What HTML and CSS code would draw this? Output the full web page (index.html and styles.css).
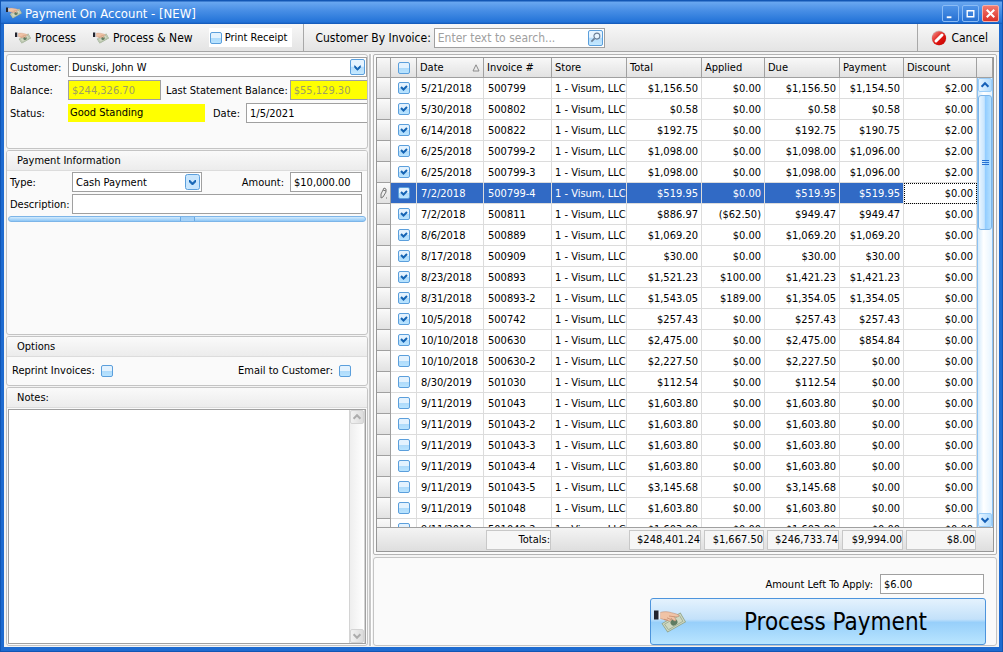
FILE: index.html
```html
<!DOCTYPE html>
<html lang="en">
<head>
<meta charset="utf-8">
<title>Payment On Account - [NEW]</title>
<link rel="stylesheet" href="styles.css">
</head>
<body>
<svg class="defs" aria-hidden="true">
  <defs>
    <linearGradient id="cancelRed" x1="0" y1="0" x2="1" y2="1">
      <stop offset="0" stop-color="#f2a09c"/><stop offset=".5" stop-color="#e01812"/><stop offset="1" stop-color="#c80000"/>
    </linearGradient>
    <symbol id="pay" viewBox="0 0 32 23">
      <path d="M7.500 13.500 26.500 2.500 32 12 13.500 22.500z" fill="#8fa287"/>
      <path d="M8.500 13.700 26.200 3.500l4.800 8.200L13.800 21.400z" fill="#cfd8c2"/>
      <path d="m10.500 14.200 15-8.700 3.400 5.800-14.400 8.400z" fill="none" stroke="#94a58c" stroke-width=".8"/>
      <ellipse cx="20" cy="12.300" rx="3.600" ry="3" transform="rotate(-30 20 12.300)" fill="#5f7c62"/>
      <path d="M6 2.500c4-1.200 8-1 11.500.2 3.500 1 6.500 1.300 7.500 3 .4 1-2 1.300-5 .9l1.800 2.800c.7 1.400-1 2-2.300.8L17 8.300c1 2.600-1 3.700-2.800 2.200C11.500 10.600 9 9 6 8.400z" fill="#f0c3a6" stroke="#c48f74" stroke-width=".6"/>
      <path d="m13 7.800 4.500 2M15 6l5 .7M10 9.300l4 1" stroke="#c18464" stroke-width=".7" fill="none"/>
      <path d="M4 1.300h2.300v7.600L4 9.200z" fill="#eef1f6"/>
      <path d="M0 .5h4.500v9H0z" fill="#23242e"/>
    </symbol>
  </defs>
</svg>
<div class="window">
  <header class="titlebar">
    <svg class="icon"><use href="#pay"/></svg>
    <h1 class="title">Payment On Account - [NEW]</h1>
    <button class="winbtn" aria-label="Minimize"><svg viewBox="0 0 16 16"><path d="M4 11h5v2H4z" fill="#fff"/></svg></button>
    <button class="winbtn" aria-label="Maximize"><svg viewBox="0 0 16 16"><path d="M4.500 5h7v6.500h-7zM4 5h8" fill="none" stroke="#fff" stroke-width="1.500"/></svg></button>
    <button class="winbtn winbtn-close" aria-label="Close"><svg viewBox="0 0 16 16"><path d="m4 4 8 8m0-8-8 8" stroke="#fff" stroke-width="2.200"/></svg></button>
  </header>

  <nav class="toolbar">
    <button class="tool"><svg class="icon"><use href="#pay"/></svg>Process</button>
    <button class="tool tool-new"><svg class="icon"><use href="#pay"/></svg>Process &amp; New</button>
    <label class="receipt"><input type="checkbox" class="check">Print Receipt</label>
    <div class="find">
      <label for="find">Customer By Invoice:</label>
      <div class="field search">
        <input id="find" type="text" placeholder="Enter text to search...">
        <button class="minibtn" aria-label="Search"><svg viewBox="0 0 14 14"><circle cx="8.500" cy="5.500" r="3.200" fill="#e8f5ff" stroke="#6b7f96" stroke-width="1.200"/><path d="M6 8 2.500 11.500" stroke="#6b7f96" stroke-width="1.800"/></svg></button>
      </div>
    </div>
    <div class="cancelbox">
      <button class="tool"><svg class="cancel-icon" viewBox="0 0 16 16"><circle cx="8" cy="8" r="7.500" fill="#c9c9c9"/><circle cx="8" cy="8.200" r="7" fill="url(#cancelRed)"/><path d="m5 11 6-6" stroke="#fff" stroke-width="3" stroke-linecap="round"/></svg>Cancel</button>
    </div>
  </nav>

  <main class="content">
    <div class="left">
      <section class="panel customer">
        <div class="row">
          <label class="lab" for="customer">Customer:</label>
          <div class="field combo">
            <input id="customer" type="text" value="Dunski, John W">
            <button class="minibtn" aria-label="Open customer list"><svg viewBox="0 0 14 14"><path d="m4 5 3 3 3-3v2L7 10 4 7z" fill="#1464b4" stroke="#1464b4"/></svg></button>
          </div>
        </div>
        <div class="row">
          <label class="lab" for="balance">Balance:</label>
          <input id="balance" class="box yellow balance" type="text" value="$244,326.70" disabled>
          <label for="last">Last Statement Balance:</label>
          <input id="last" class="box yellow last" type="text" value="$55,129.30" disabled>
        </div>
        <div class="row">
          <span class="lab">Status:</span>
          <output class="status">Good Standing</output>
          <label class="datelab" for="date">Date:</label>
          <input id="date" class="box date" type="text" value="1/5/2021">
        </div>
      </section>

      <section class="panel payment">
        <h2 class="head">Payment Information</h2>
        <div class="payrows">
          <div class="row">
            <label class="lab2" for="type">Type:</label>
            <div class="selectbox">
              <select id="type"><option>Cash Payment</option></select>
            </div>
            <label class="amountlab" for="amount">Amount:</label>
            <input id="amount" class="box amount" type="text" value="$10,000.00">
          </div>
          <div class="row">
            <label class="lab2" for="desc">Description:</label>
            <input id="desc" class="box desc" type="text">
          </div>
        </div>
        <div class="splitter"></div>
      </section>

      <section class="panel options">
        <h2 class="head">Options</h2>
        <div class="optrow">
          <label class="opt">Reprint Invoices:<input type="checkbox" class="check"></label>
          <label class="opt">Email to Customer:<input type="checkbox" class="check"></label>
        </div>
      </section>

      <section class="panel notes">
        <h2 class="head"><label for="notes">Notes:</label></h2>
        <div class="notesbox">
          <textarea id="notes"></textarea>
          <div class="scroll scroll-off">
            <button class="arrow" aria-label="Scroll up"><svg viewBox="0 0 14 14"><path d="m3 9 4-4 4 4" fill="none" stroke="#adadad" stroke-width="2.400"/></svg></button>
            <div class="track"></div>
            <button class="arrow" aria-label="Scroll down"><svg viewBox="0 0 14 14"><path d="m3 5 4 4 4-4" fill="none" stroke="#adadad" stroke-width="2.400"/></svg></button>
          </div>
        </div>
      </section>
    </div>

    <div class="divider"></div>

    <div class="right">
      <div class="gridframe">
        <div class="gridview">
          <table class="grid">
            <colgroup><col class="c-ind"><col class="c-chk"><col class="c-date"><col class="c-inv"><col class="c-store"><col class="c-total"><col class="c-app"><col class="c-due"><col class="c-pay"><col class="c-disc"><col class="c-bar"></colgroup>
            <thead>
              <tr>
                <th></th>
                <th class="mid"><input type="checkbox" class="check" aria-label="Select all"></th>
                <th><span class="sorted">Date<svg viewBox="0 0 8 8"><path d="M4 .8 7 7H1z" fill="none" stroke="#8a8a8a"/></svg></span></th>
                <th>Invoice #</th><th>Store</th><th>Total</th><th>Applied</th><th>Due</th><th>Payment</th><th>Discount</th><th></th>
              </tr>
            </thead>
            <tbody id="rows"></tbody>
            <tfoot>
              <tr>
                <td colspan="3"></td><td><span class="sum">Totals:</span></td><td></td>
                <td><span class="sum">$248,401.24</span></td><td><span class="sum">$1,667.50</span></td>
                <td><span class="sum">$246,733.74</span></td><td><span class="sum">$9,994.00</span></td>
                <td><span class="sum">$8.00</span></td><td></td>
              </tr>
            </tfoot>
          </table>
          <div class="scroll gridscroll">
            <button class="arrow" aria-label="Scroll up"><svg viewBox="0 0 14 14"><path d="m3 9 4-4 4 4" fill="none" stroke="#1560b8" stroke-width="2.400"/></svg></button>
            <div class="track"><div class="thumb"><i></i><i></i><i></i></div></div>
            <button class="arrow" aria-label="Scroll down"><svg viewBox="0 0 14 14"><path d="m3 5 4 4 4-4" fill="none" stroke="#1560b8" stroke-width="2.400"/></svg></button>
          </div>
        </div>
      </div>
      <section class="panel apply">
        <div class="applyrow">
          <label for="left">Amount Left To Apply:</label>
          <input id="left" class="box leftamt" type="text" value="$6.00">
        </div>
        <button class="process"><svg class="bigicon"><use href="#pay"/></svg><span>Process Payment</span></button>
      </section>
    </div>
  </main>
</div>
<script src="script.js"></script>
</body>
</html>
```
FILE: script.js
```js
// checked, date, invoice, total, applied, due, payment, discount
const invoices = [
  [1, '5/21/2018', '500799', '$1,156.50', '$0.00', '$1,156.50', '$1,154.50', '$2.00'],
  [1, '5/30/2018', '500802', '$0.58', '$0.00', '$0.58', '$0.58', '$0.00'],
  [1, '6/14/2018', '500822', '$192.75', '$0.00', '$192.75', '$190.75', '$2.00'],
  [1, '6/25/2018', '500799-2', '$1,098.00', '$0.00', '$1,098.00', '$1,096.00', '$2.00'],
  [1, '6/25/2018', '500799-3', '$1,098.00', '$0.00', '$1,098.00', '$1,096.00', '$2.00'],
  [1, '7/2/2018', '500799-4', '$519.95', '$0.00', '$519.95', '$519.95', '$0.00'],
  [1, '7/2/2018', '500811', '$886.97', '($62.50)', '$949.47', '$949.47', '$0.00'],
  [1, '8/6/2018', '500889', '$1,069.20', '$0.00', '$1,069.20', '$1,069.20', '$0.00'],
  [1, '8/17/2018', '500909', '$30.00', '$0.00', '$30.00', '$30.00', '$0.00'],
  [1, '8/23/2018', '500893', '$1,521.23', '$100.00', '$1,421.23', '$1,421.23', '$0.00'],
  [1, '8/31/2018', '500893-2', '$1,543.05', '$189.00', '$1,354.05', '$1,354.05', '$0.00'],
  [1, '10/5/2018', '500742', '$257.43', '$0.00', '$257.43', '$257.43', '$0.00'],
  [1, '10/10/2018', '500630', '$2,475.00', '$0.00', '$2,475.00', '$854.84', '$0.00'],
  [0, '10/10/2018', '500630-2', '$2,227.50', '$0.00', '$2,227.50', '$0.00', '$0.00'],
  [0, '8/30/2019', '501030', '$112.54', '$0.00', '$112.54', '$0.00', '$0.00'],
  [0, '9/11/2019', '501043', '$1,603.80', '$0.00', '$1,603.80', '$0.00', '$0.00'],
  [0, '9/11/2019', '501043-2', '$1,603.80', '$0.00', '$1,603.80', '$0.00', '$0.00'],
  [0, '9/11/2019', '501043-3', '$1,603.80', '$0.00', '$1,603.80', '$0.00', '$0.00'],
  [0, '9/11/2019', '501043-4', '$1,603.80', '$0.00', '$1,603.80', '$0.00', '$0.00'],
  [0, '9/11/2019', '501043-5', '$3,145.68', '$0.00', '$3,145.68', '$0.00', '$0.00'],
  [0, '9/11/2019', '501048', '$1,603.80', '$0.00', '$1,603.80', '$0.00', '$0.00'],
  [0, '9/11/2019', '501048-2', '$1,603.80', '$0.00', '$1,603.80', '$0.00', '$0.00']
];
const current = 5;
const pencil = '<svg class="pencil" viewBox="0 0 10 14"><path d="M2 12V8l3-6 2 1v3L4 11zM4 4l3 1M7 12h1" fill="none" stroke="#777"/></svg>';

document.getElementById('rows').innerHTML = invoices.map(([on, date, inv, ...sums], i) =>
  `<tr${i === current ? ' class="current"' : ''}>
    <td class="ind">${i === current ? pencil : ''}</td>
    <td class="mid"><input type="checkbox" class="check" aria-label="Pay ${inv}"${on ? ' checked' : ''}></td>
    <td>${date}</td><td>${inv}</td><td class="store">1 - Visum, LLC</td>
    ${sums.map(s => `<td class="num">${s}</td>`).join('')}<td></td>
  </tr>`).join('');
```
FILE: styles.css
```css
* { box-sizing: border-box; }
html, body { height: 100%; margin: 0; }
body, input, button, select, textarea {
  font-family: "DejaVu Sans Condensed", "Noto Sans", sans-serif;
  font-size: 11px;
  color: #000;
}
button, input, select, textarea { margin: 0; padding: 0; border: 0; background: none; outline: 0; }
button svg { display: block; }
.defs { position: absolute; width: 0; height: 0; }

.window {
  height: 100vh;
  display: flex;
  flex-direction: column;
  padding: 0 4px 4px;
  background: #1e6bd0;
  border: solid #1256b4;
  border-width: 0 1px 1px;
}

.titlebar {
  height: 24px;
  flex: none;
  display: flex;
  align-items: center;
  gap: 3px;
  margin: 0 -4px;
  padding: 2px 3px 0 5px;
  background: linear-gradient(#1256b4 1px, #69a7f0 2px, #4a90e6 10px, #2373d8 22px, #1256b4);
}
.title { flex: 1; margin: 0; font-size: 13px; font-weight: normal; color: #fff; }
.icon { width: 16px; height: 12px; flex: none; }
.winbtn {
  width: 17px; height: 17px;
  border: 1px solid #8bbcf5;
  border-radius: 2px;
  background: linear-gradient(#4f94e8, #2670d2);
}
.winbtn svg { width: 15px; height: 15px; }
.winbtn-close { border-color: #f6b0a8; background: linear-gradient(#f27a70, #dc3128); }

.toolbar {
  height: 28px;
  flex: none;
  display: flex;
  align-items: center;
  margin: 0 -1px;
  padding-left: 11px;
  background: linear-gradient(#f7f7f7, #e4e4e4);
  border-bottom: 1px solid #a5a5a5;
  font-size: 12px;
}
.tool { display: flex; align-items: center; gap: 4px; font-size: 12px; }
.tool-new { margin-left: 17px; }
.receipt {
  display: flex; align-items: center; gap: 3px;
  height: 19px;
  margin-left: 16px; padding: 0 5px 0 1px;
  background: #fff;
  font-size: 11px;
}
.find {
  display: flex; align-items: center; gap: 3px;
  align-self: stretch;
  margin-left: 11px; padding-left: 11px;
  border-left: 1px solid #a8a8a8;
}
.search { width: 171px; }
.search input { font-size: 12px; }
.search input::placeholder { color: #a0a0a0; }
.cancelbox { display: flex; align-self: stretch; margin-left: auto; padding: 0 11px 0 13px; border-left: 1px solid #a8a8a8; }
.cancel-icon { width: 16px; height: 16px; }

.check {
  appearance: none;
  flex: none;
  width: 12px; height: 12px;
  border: 1px solid #5b9fdc;
  border-radius: 2px;
  background: linear-gradient(#e3f2fe 45%, #aedafa 50%, #b9e4ff);
}
.check:checked {
  background: url("data:image/svg+xml,%3Csvg xmlns='http://www.w3.org/2000/svg' viewBox='0 0 10 10'%3E%3Cpath d='M2 4l2.500 2.500L8 3' fill='none' stroke='%231464b4' stroke-width='2'/%3E%3C/svg%3E"), linear-gradient(#e3f2fe 45%, #aedafa 50%, #b9e4ff);
}
.field { display: flex; align-items: center; height: 20px; padding: 1px; background: #fff; border: 1px solid #a0a0a0; }
.field input { flex: 1; min-width: 0; padding-left: 2px; }
.minibtn {
  flex: none;
  width: 15px; height: 16px;
  border: 1px solid #5b9fdc;
  border-radius: 2px;
  background: linear-gradient(#e6f4ff 45%, #b5dcfb 50%, #c4e9ff);
}
.box { height: 20px; padding: 0 3px; background: #fff; border: 1px solid #a0a0a0; }
.box.yellow { background: #ff0; color: #a0a060; }

.content { flex: 1; min-height: 0; display: flex; margin: 0 -1px; padding: 2px 2px 1px 2px; background: #f4f4f4; }
.left { flex: 0 0 362px; min-width: 0; display: flex; flex-direction: column; gap: 1px; min-height: 0; }
.divider { flex: none; width: 3px; margin: 0 1px; background: #c8c8c8; border: solid #fff; border-width: 0 1px 0 0; }
.right { flex: 1; min-width: 0; display: flex; flex-direction: column; gap: 2px; }

.panel { background: #fafafa; border: 1px solid #c4c4c4; border-radius: 3px; overflow: hidden; }
.head {
  height: 20px;
  margin: 0; padding-left: 10px;
  line-height: 20px;
  font-size: 11px; font-weight: normal;
  background: linear-gradient(#fafafa, #ececec);
  border-bottom: 1px solid #dcdcdc;
}
.row { display: flex; align-items: center; }

.customer { height: 95px; padding: 2px 0 0 3px; display: flex; flex-direction: column; gap: 3px; }
.lab { flex: none; width: 58px; }
.combo { flex: 1; min-width: 0; }
.balance { flex: none; width: 93px; margin-right: 5px; }
.last { flex: 1; width: 0; min-width: 0; margin-left: 2px; border-right: 0; }
.status { flex: none; width: 137px; height: 18px; padding-left: 2px; line-height: 18px; background: #ff0; }
.datelab { margin: 0 6px 0 8px; }
.date { flex: 1; width: 0; min-width: 0; border-right: 0; }

.payment { height: 185px; }
.payrows { display: flex; flex-direction: column; gap: 2px; padding: 1px 5px 0 3px; }
.lab2 { flex: none; width: 62px; }
.selectbox { flex: none; width: 130px; }
select {
  appearance: none;
  width: 100%; height: 20px;
  padding-left: 3px;
  border: 1px solid #a0a0a0;
  background:
    url("data:image/svg+xml,%3Csvg xmlns='http://www.w3.org/2000/svg' viewBox='0 0 15 16'%3E%3Crect x='.5' y='.5' width='14' height='15' rx='2' fill='%23c9e6fd' stroke='%235b9fdc'/%3E%3Cpath d='M4.500 6l3 3 3-3v2l-3 3-3-3z' fill='%231464b4' stroke='%231464b4'/%3E%3C/svg%3E") right 1px center / 15px 16px no-repeat,
    #fff;
}
.amountlab { margin: 0 6px 0 auto; }
.amount { width: 72px; }
.desc { flex: 1; width: 0; min-width: 0; }
.splitter {
  height: 6px;
  margin: 2px 1px 0;
  border: 1px solid #7db5e8;
  border-radius: 3px;
  background:
    linear-gradient(90deg, #6aa9e3 1px, #a5d2f8 1px 14px, #6aa9e3 14px) center / 15px 100% no-repeat,
    linear-gradient(#d4ebfd, #8ec7f7);
}
.options { height: 50px; }
.optrow { display: flex; justify-content: space-between; align-items: center; height: 27px; padding: 0 16px 0 5px; }
.opt { display: flex; align-items: center; gap: 6px; }

.notes { flex: 1; min-height: 0; display: flex; flex-direction: column; }
.notes .head { flex: none; }
.notesbox { flex: 1; min-height: 0; display: flex; margin: 1px; background: #fff; border: 1px solid #a0a0a0; }
.notesbox textarea { flex: 1; min-width: 0; resize: none; }

.scroll { flex: none; width: 16px; display: flex; flex-direction: column; background: linear-gradient(90deg, #d3eafc, #fff 40%, #e6f4ff); border: solid #8cc2f2; border-width: 0 1px; }
.arrow { flex: none; height: 14px; border: 1px solid #9ccdf7; border-radius: 2px; background: linear-gradient(90deg, #e6f4ff, #b0dcff); }
.arrow svg { width: 12px; height: 12px; }
.track { flex: 1; padding-top: 3px; }
.scroll-off { background: linear-gradient(90deg, #eee, #fff); border-color: #d4d4d4; }
.scroll-off .arrow { border-color: #d4d4d4; background: linear-gradient(90deg, #f2f2f2, #dcdcdc); }
.thumb {
  height: 135px;
  display: flex; flex-direction: column; align-items: center; justify-content: center; gap: 1px;
  border: 1px solid #7db5e8;
  border-radius: 3px;
  background: linear-gradient(90deg, #e9f5ff, #c8e5fd 45%, #90ccff 50%, #b5e0ff);
}
.thumb i { width: 7px; height: 1px; background: #2670d2; }

.gridframe { flex: 1; min-height: 0; display: flex; padding: 2px; border: 1px solid #b4b4b4; border-radius: 2px; background: #fafafa; }
.gridview { position: relative; flex: 1; min-width: 0; overflow: hidden; border: 1px solid #979797; background: #fff; }
.grid { width: 100%; table-layout: fixed; border-spacing: 0; }
.c-ind { width: 14px; } .c-chk { width: 26px; } .c-date { width: 67px; } .c-inv { width: 68px; }
.c-store, .c-total, .c-due { width: 75px; } .c-app { width: 63px; } .c-pay { width: 64px; } .c-bar { width: 16px; }
th, td { padding: 0; white-space: nowrap; overflow: hidden; }
thead th {
  position: sticky; top: 0; z-index: 1;
  height: 20px;
  padding: 0 3px;
  text-align: left; font-weight: normal;
  background: linear-gradient(#f8f8f8, #e2e2e2);
  border: solid #a0a0a0; border-width: 0 1px 1px 0;
}
thead th.mid, td.mid { padding: 0; text-align: center; }
.mid .check { display: block; margin: 0 auto; }
.sorted { display: flex; justify-content: space-between; align-items: center; }
.sorted svg { width: 8px; height: 8px; }
tbody td { height: 21px; padding-left: 4px; border: solid #dcdcdc; border-width: 0 1px 1px 0; }
td.num { padding: 0 3px; text-align: right; }
td.store { padding-left: 3px; }
td.ind { padding: 0; background: linear-gradient(#fafafa, #e2e2e2); border-color: #a0a0a0; }
.pencil { display: block; width: 10px; height: 14px; margin: 0 auto; }
.current td { color: #fff; background: #316ac5; }
.current td.ind { background: linear-gradient(#fafafa, #e2e2e2); }
.current td:nth-child(10) { color: #000; background: #fff; outline: 1px dotted #000; outline-offset: -1px; }
tfoot td {
  position: sticky; bottom: 0;
  height: 24px;
  padding: 2px 1px 1px 2px;
  background: linear-gradient(#f4f4f4, #dedede);
  border-top: 1px solid #a0a0a0;
}
.sum { display: block; height: 20px; line-height: 18px; text-align: right; background: #f6f6f6; border: 1px solid #c8c8c8; }
.gridscroll { position: absolute; top: 20px; right: 0; bottom: 24px; }

.apply { height: 89px; flex: none; padding: 16px 10px 0 0; display: flex; flex-direction: column; align-items: flex-end; gap: 4px; }
.applyrow { display: flex; align-items: center; gap: 7px; padding-right: 2px; }
.leftamt { width: 104px; }
.process {
  display: flex; align-items: center;
  width: 336px; height: 47px;
  padding-left: 3px;
  border: 1px solid #4d94dc;
  border-radius: 3px;
  background: linear-gradient(#e4f2fd, #c3e1fa 45%, #97cffa 52%, #b9e5ff);
  font-size: 24px;
}
.process span { flex: 1; text-align: center; }
.bigicon { width: 32px; height: 23px; }
```
